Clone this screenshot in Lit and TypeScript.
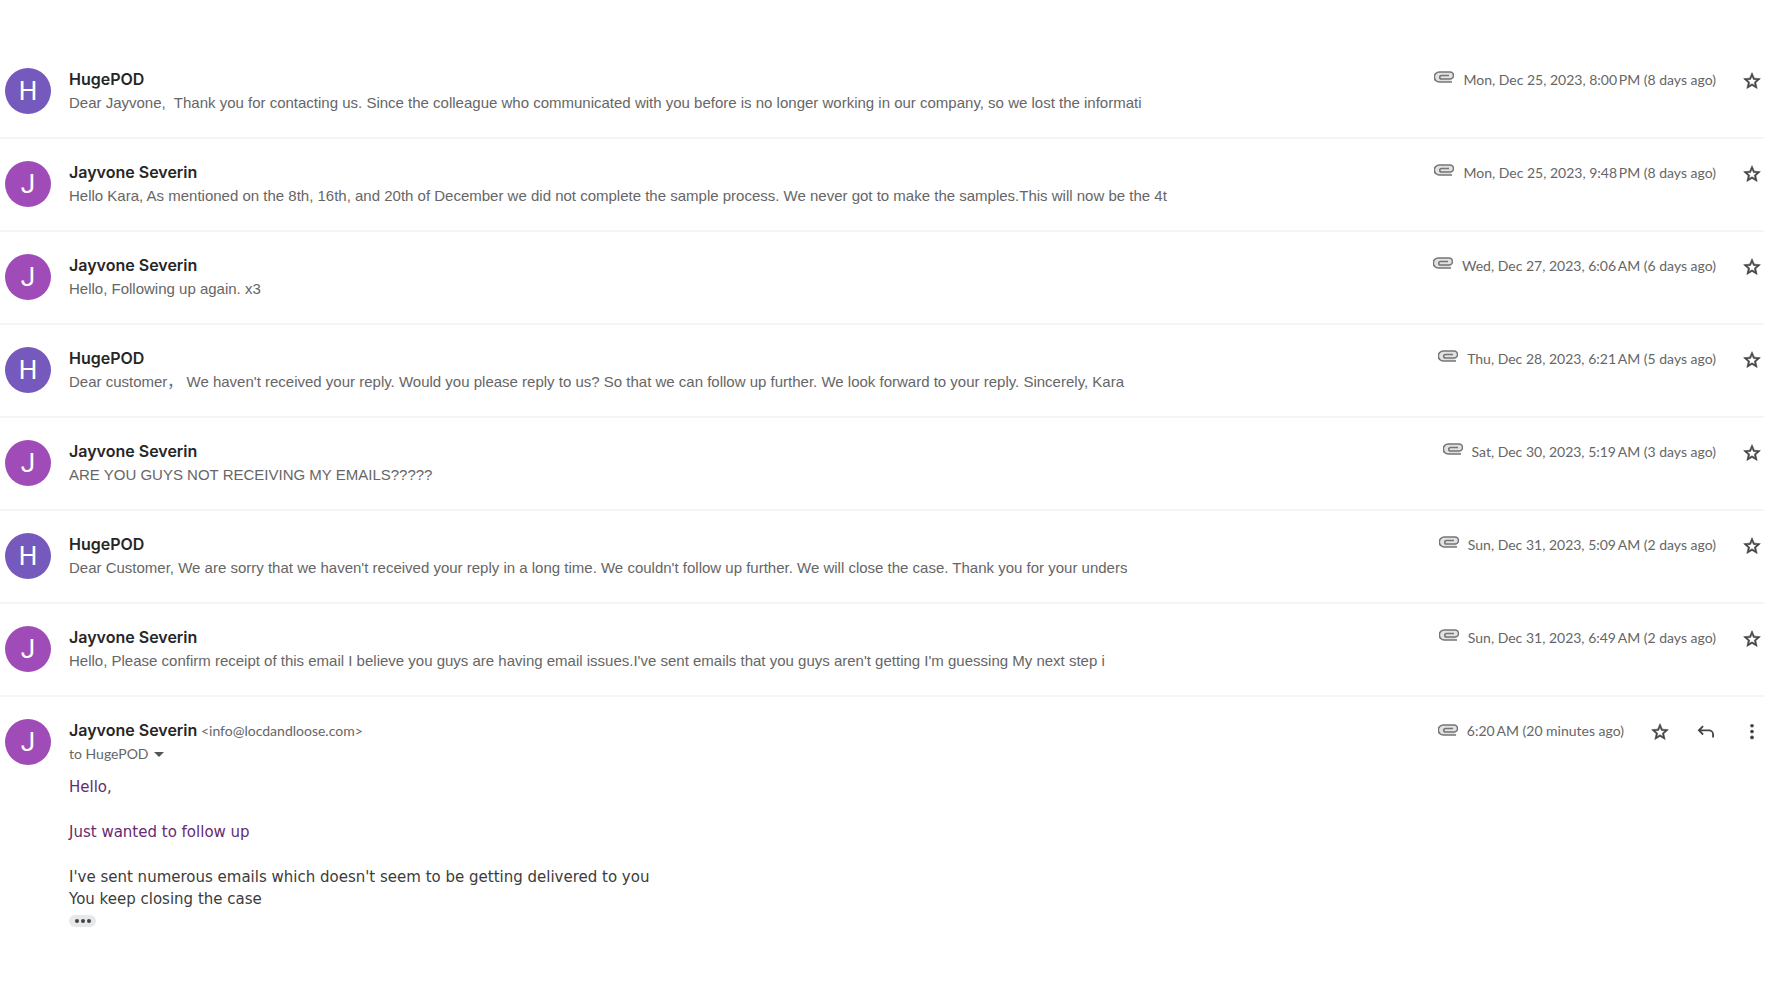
import { LitElement, html, css, svg, nothing } from "lit";
import { customElement, property } from "lit/decorators.js";

interface Message {
  from: string;
  snippet: string;
  date: string;
}

const MESSAGES: Message[] = [
  { from: "HugePOD", date: "Mon, Dec 25, 2023, 8:00\u2009PM (8 days ago)", snippet: "Dear Jayvone,\u00a0 Thank you for contacting us. Since the colleague who communicated with you before is no longer working in our company, so we lost the informati" },
  { from: "Jayvone Severin", date: "Mon, Dec 25, 2023, 9:48\u2009PM (8 days ago)", snippet: "Hello Kara, As mentioned on the 8th, 16th, and 20th of December we did not complete the sample process. We never got to make the samples.This will now be the 4t" },
  { from: "Jayvone Severin", date: "Wed, Dec 27, 2023, 6:06\u2009AM (6 days ago)", snippet: "Hello, Following up again. x3" },
  { from: "HugePOD", date: "Thu, Dec 28, 2023, 6:21\u2009AM (5 days ago)", snippet: "Dear customer\uff0c We haven't received your reply. Would you please reply to us? So that we can follow up further. We look forward to your reply. Sincerely, Kara" },
  { from: "Jayvone Severin", date: "Sat, Dec 30, 2023, 5:19\u2009AM (3 days ago)", snippet: "ARE YOU GUYS NOT RECEIVING MY EMAILS?????" },
  { from: "HugePOD", date: "Sun, Dec 31, 2023, 5:09\u2009AM (2 days ago)", snippet: "Dear Customer, We are sorry that we haven't received your reply in a long time. We couldn't follow up further. We will close the case. Thank you for your unders" },
  { from: "Jayvone Severin", date: "Sun, Dec 31, 2023, 6:49\u2009AM (2 days ago)", snippet: "Hello, Please confirm receipt of this email I believe you guys are having email issues.I've sent emails that you guys aren't getting I'm guessing My next step i" },
];

const ICONS = {
  star: svg`<path stroke="currentColor" stroke-width="0.7" d="M22 9.24l-7.19-.62L12 2 9.19 8.63 2 9.24l5.46 4.73L5.82 21 12 17.27 18.18 21l-1.63-7.03L22 9.24zM12 15.4l-3.76 2.27 1-4.28-3.32-2.88 4.38-.38L12 6.1l1.71 4.04 4.38.38-3.32 2.88 1 4.28L12 15.4z"/>`,
  reply: svg`<path d="M8.500 5L3.500 10l5 5M4 10h11.500a5 5 0 0 1 5 5V18.500" fill="none" stroke="currentColor" stroke-width="2.200"/>`,
  more: svg`<circle cx="12" cy="4.500" r="2.200"/><circle cx="12" cy="11.500" r="2.200"/><circle cx="12" cy="18.500" r="2.200"/>`,
};

@customElement("icon-button")
export class IconButton extends LitElement {
  @property() icon: keyof typeof ICONS = "star";
  @property() label = "";

  static styles = css`
    :host { display: block; }
    .button {
      display: block;
      width: 20px;
      height: 20px;
      padding: 0;
      border: 0;
      background: none;
      color: #444;
      cursor: pointer;
    }
    .glyph { display: block; width: 20px; height: 20px; fill: currentColor; }
  `;

  render() {
    return html`<button class="button" type="button" aria-label=${this.label}>
      <svg class="glyph" viewBox="0 0 24 24" aria-hidden="true">${ICONS[this.icon]}</svg>
    </button>`;
  }
}

@customElement("message-row")
export class MessageRow extends LitElement {
  @property() from = "";
  @property() date = "";
  @property() snippet = "";
  @property() email = "";
  @property() to = "";
  @property({ type: Boolean }) open = false;

  static styles = css`
    :host { display: block; }
    .row {
      display: grid;
      grid-template-columns: 46px minmax(0, 1fr) auto;
      column-gap: 18px;
      align-items: start;
      min-height: 91px;
      box-sizing: border-box;
      padding: 22px 2px 0 5px;
      font-family: Lato, sans-serif;
      font-size: 14px;
      color: #666;
    }
    .avatar {
      display: flex;
      align-items: center;
      justify-content: center;
      width: 46px;
      height: 46px;
      border-radius: 50%;
      background: #a04cb8;
      color: #fff;
      font-family: Roboto, sans-serif;
      font-size: 26px;
      line-height: 48px;
    }
    .avatar.company { background: #7659bd; }
    .name { display: inline; margin: 0; font: 600 16px/22px Inter, sans-serif; color: #262626; }
    .heading { line-height: 22px; white-space: nowrap; }
    .snippet {
      margin: 1px 0 0;
      font: 15px/22px "Liberation Sans", "Noto Sans CJK SC", sans-serif;
      white-space: nowrap;
      overflow: hidden;
      text-overflow: clip;
    }
    .recipient {
      display: flex;
      align-items: center;
      gap: 5px;
      margin: 1px 0 0;
      padding: 0;
      border: 0;
      background: none;
      color: inherit;
      font: inherit;
      line-height: 22px;
    }
    .caret { border: 5px solid transparent; border-top-color: #555; border-bottom: 0; }
    .body { margin-top: 11px; font: 15px/22px "DejaVu Sans", sans-serif; color: #3c3c3c; }
    .line { margin: 0 0 23px; }
    .line.last { margin: 0; }
    .accent { color: #672a70; }
    .trimmed {
      display: flex;
      align-items: center;
      justify-content: center;
      gap: 2px;
      width: 27px;
      height: 12px;
      margin-top: 5px;
      padding: 0;
      border: 0;
      border-radius: 6px;
      background: #e6e8ea;
    }
    .dot { width: 4px; height: 4px; border-radius: 50%; background: #444; }
    .meta { display: flex; align-items: center; margin-top: 1px; line-height: 22px; white-space: nowrap; }
    .clip { width: 20px; height: 12px; margin: 0 9px 6px 0; fill: #e2e2e2; stroke: #757575; stroke-width: 1.6; }
    .clip.open { margin-bottom: 2px; }
    .actions { display: flex; gap: 26px; margin-left: 26px; padding-top: 2px; }
  `;

  render() {
    return html`<article class="row">
      <div class="avatar ${this.from === "HugePOD" ? "company" : ""}" aria-hidden="true">${this.from[0]}</div>
      <div class="content">
        <div class="heading">
          <h2 class="name">${this.from}</h2>
          ${this.email ? html`<span class="email">&lt;${this.email}&gt;</span>` : nothing}
        </div>
        ${this.open ? this.renderBody() : html`<p class="snippet">${this.snippet}</p>`}
      </div>
      <div class="meta">
        <svg class="clip ${this.open ? "open" : ""}" viewBox="2 6 20 12" role="img" aria-label="Has attachment">
          <path d="M20 17H7.300a4.500 4.500 0 0 1 0-10H18a3.500 3.500 0 0 1 0 7H9.500a1.500 1.500 0 0 1 0-3.500H17"/>
        </svg>
        <time>${this.date}</time>
        <div class="actions">
          <icon-button icon="star" label="Star"></icon-button>
          ${this.open
            ? html`<icon-button icon="reply" label="Reply"></icon-button>
                <icon-button icon="more" label="More"></icon-button>`
            : nothing}
        </div>
      </div>
    </article>`;
  }

  private renderBody() {
    return html`
      <button class="recipient" type="button" aria-label="Show details">to ${this.to}<span class="caret"></span></button>
      <div class="body">
        <p class="line accent">Hello,</p>
        <p class="line accent">Just wanted to follow up</p>
        <p class="line last">I've sent numerous emails which doesn't seem to be getting delivered to you<br />You keep closing the case</p>
        <button class="trimmed" type="button" aria-label="Show trimmed content">
          <span class="dot"></span><span class="dot"></span><span class="dot"></span>
        </button>
      </div>
    `;
  }
}

@customElement("app-root")
export class AppRoot extends LitElement {
  static styles = css`
    :host { display: block; min-height: 100vh; background: #fff; }
    .thread { margin: 0; padding: 46px 14px 40px 0; list-style: none; }
    .item { border-bottom: 2px solid #f5f5f5; }
    .item.current { border-bottom: 0; }
  `;

  render() {
    return html`<main>
      <ul class="thread">
        ${MESSAGES.map(
          (m) => html`<li class="item"><message-row .from=${m.from} .date=${m.date} .snippet=${m.snippet}></message-row></li>`,
        )}
        <li class="item current">
          <message-row open from="Jayvone Severin" email="info@locdandloose.com" to="HugePOD" .date=${"6:20\u2009AM (20 minutes ago)"}></message-row>
        </li>
      </ul>
    </main>`;
  }
}
